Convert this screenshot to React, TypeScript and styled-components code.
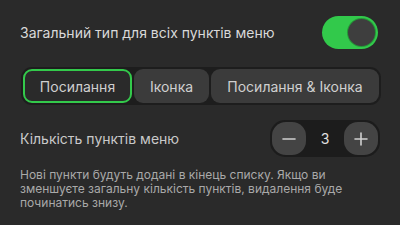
import React, { useState } from 'react';
import styled, { createGlobalStyle } from 'styled-components';

const GlobalStyle = createGlobalStyle`
  html, body {
    margin: 0;
    padding: 0;
    background: #2a2a2a;
  }
  body {
    font-family: Inter, "Noto Sans", "Liberation Sans", sans-serif;
    -webkit-font-smoothing: antialiased;
  }
`;

const Panel = styled.div`
  width: 400px;
  height: 225px;
  box-sizing: border-box;
  padding: 16px 20px 0 20px;
  display: flex;
  flex-direction: column;
`;

const Row = styled.div<{ $mt?: number }>`
  display: flex;
  align-items: center;
  justify-content: space-between;
  margin-top: ${p => p.$mt ?? 0}px;
`;

const Label = styled.span<{ $dim?: boolean }>`
  font-size: 14px;
  color: ${p => (p.$dim ? '#c9c9c9' : '#d9d9d9')};
`;

const Toggle = styled.button<{ $on: boolean }>`
  width: 56px;
  height: 33px;
  border: none;
  border-radius: 17px;
  padding: 3px;
  margin-right: 2px;
  background: ${p => (p.$on ? '#32c94b' : '#555')};
  display: flex;
  justify-content: ${p => (p.$on ? 'flex-end' : 'flex-start')};
  align-items: center;
  cursor: pointer;
`;

const Knob = styled.span`
  width: 27px;
  height: 27px;
  border-radius: 50%;
  background: #3e3e3e;
  box-shadow: 0 0 0 1px rgba(0, 0, 0, 0.25);
`;

const Segmented = styled.div`
  margin-top: 18px;
  margin-left: 1px;
  margin-right: -1px;
  height: 38px;
  box-sizing: border-box;
  padding: 2px;
  gap: 2px;
  display: flex;
  background: #1d1d1d;
  border-radius: 11px;
`;

const Segment = styled.button<{ $active: boolean; $w: number }>`
  width: ${p => p.$w}px;
  flex: ${p => (p.$w ? 'none' : '1')};
  box-sizing: border-box;
  height: 34px;
  border-radius: 9px;
  border: 2px solid ${p => (p.$active ? '#33c94b' : 'transparent')};
  background: ${p => (p.$active ? '#2a2a2a' : '#3b3b3b')};
  color: #cfcfcf;
  font-family: inherit;
  font-size: 14px;
  padding: 0;
  cursor: pointer;
`;

const Stepper = styled.div`
  width: 110px;
  height: 37px;
  box-sizing: border-box;
  padding: 2px;
  display: flex;
  align-items: center;
  justify-content: space-between;
  background: #1c1c1c;
  border-radius: 15px;
`;

const StepButton = styled.button`
  width: 34px;
  height: 33px;
  border: none;
  border-radius: 14px;
  background: #444444;
  display: flex;
  align-items: center;
  justify-content: center;
  padding: 0;
  cursor: pointer;
`;

const Count = styled.span`
  font-size: 14px;
  color: #e0e0e0;
`;

const Note = styled.p`
  margin: 11px 0 0 0;
  font-size: 12px;
  line-height: 14px;
  color: #a9a9a9;
`;

const Minus = () => (
  <svg width="14" height="14" viewBox="0 0 14 14">
    <path d="M1 7h12" stroke="#d0d0d0" strokeWidth="1.6" strokeLinecap="round" />
  </svg>
);

const Plus = () => (
  <svg width="14" height="14" viewBox="0 0 14 14">
    <path d="M1 7h12M7 1v12" stroke="#d0d0d0" strokeWidth="1.6" strokeLinecap="round" />
  </svg>
);

const options = [
  { label: 'Посилання', w: 109 },
  { label: 'Іконка', w: 75 },
  { label: 'Посилання & Іконка', w: 0 },
];

const App: React.FC = () => {
  const [on, setOn] = useState(true);
  const [type, setType] = useState(0);
  const [count, setCount] = useState(3);

  return (
    <Panel>
      <GlobalStyle />
      <Row>
        <Label>Загальний тип для всіх пунктів меню</Label>
        <Toggle $on={on} onClick={() => setOn(!on)}>
          <Knob />
        </Toggle>
      </Row>
      <Segmented>
        {options.map((o, i) => (
          <Segment key={o.label} $active={type === i} $w={o.w} onClick={() => setType(i)}>
            {o.label}
          </Segment>
        ))}
      </Segmented>
      <Row $mt={15}>
        <Label $dim>Кількість пунктів меню</Label>
        <Stepper>
          <StepButton onClick={() => setCount(Math.max(0, count - 1))}>
            <Minus />
          </StepButton>
          <Count>{count}</Count>
          <StepButton onClick={() => setCount(count + 1)}>
            <Plus />
          </StepButton>
        </Stepper>
      </Row>
      <Note>
        Нові пункти будуть додані в кінець списку. Якщо ви зменшуєте загальну кількість пунктів,
        видалення буде починатись знизу.
      </Note>
    </Panel>
  );
};

export default App;
